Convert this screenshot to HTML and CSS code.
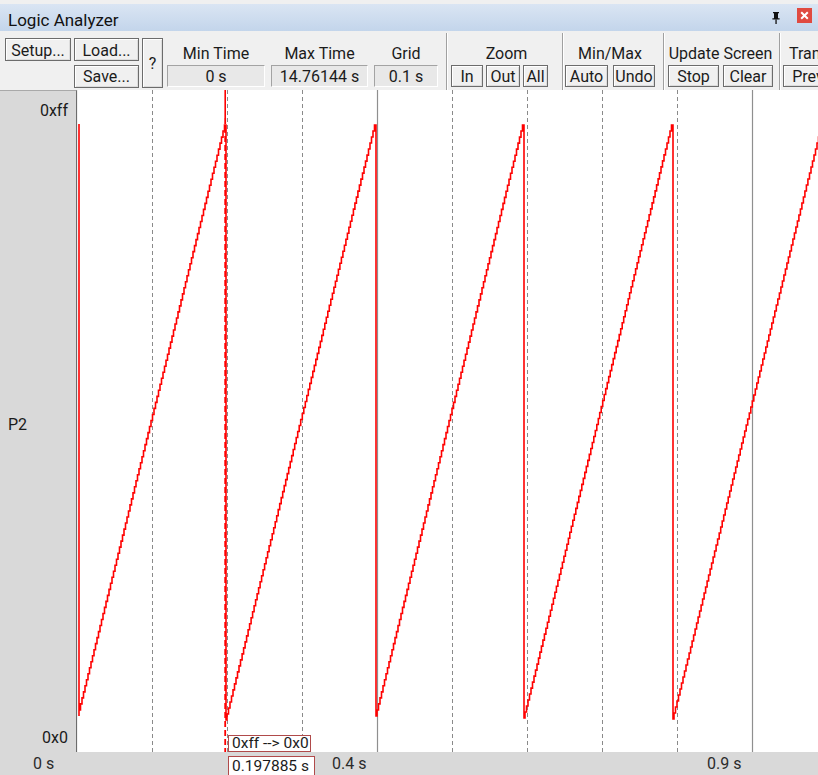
FILE: index.html
```html
<!DOCTYPE html>
<html>
<head>
<meta charset="utf-8">
<title>Logic Analyzer</title>
<link rel="stylesheet" href="styles.css">
</head>
<body>
<div class="window">
  <div class="titlebar">
    <span class="title">Logic Analyzer</span>
    <svg class="pin" width="10" height="12" viewBox="0 0 10 12"><path d="M2 0h6v1.2H7v5h1.6v1.4H1.4V6.2H3v-5H2z" fill="#111"/><rect x="4.4" y="7.4" width="1.3" height="4.6" fill="#111"/></svg>
    <span class="close"><svg width="9" height="9" viewBox="0 0 9 9"><path d="M1.2 1.2L7.8 7.8M7.8 1.2L1.2 7.8" stroke="#fff" stroke-width="2"/></svg></span>
  </div>

  <div class="toolbar">
    <div class="file-grid">
      <div class="btn b23 setup">Setup...</div>
      <div class="btn b23 load">Load...</div>
      <div class="btn b22 save">Save...</div>
      <div class="btn help">?</div>
    </div>

    <div class="grp grp-min">
      <div class="grp-label">Min Time</div>
      <div class="value">0 s</div>
    </div>
    <div class="grp grp-max">
      <div class="grp-label">Max Time</div>
      <div class="value">14.76144 s</div>
    </div>
    <div class="grp grp-grid">
      <div class="grp-label">Grid</div>
      <div class="value">0.1 s</div>
    </div>

    <div class="sep sep-1"></div>

    <div class="grp grp-zoom">
      <div class="grp-label">Zoom</div>
      <div class="btn-row">
        <div class="btn b22 w-in">In</div>
        <div class="btn b22 w-out">Out</div>
        <div class="btn b22 w-all">All</div>
      </div>
    </div>

    <div class="sep sep-2"></div>

    <div class="grp grp-minmax">
      <div class="grp-label">Min/Max</div>
      <div class="btn-row gap5">
        <div class="btn b22 w-auto">Auto</div>
        <div class="btn b22 w-undo">Undo</div>
      </div>
    </div>

    <div class="sep sep-3"></div>

    <div class="grp grp-update">
      <div class="grp-label">Update Screen</div>
      <div class="btn-row gap4">
        <div class="btn b22 w-stop">Stop</div>
        <div class="btn b22 w-clear">Clear</div>
      </div>
    </div>

    <div class="sep sep-4"></div>

    <div class="grp grp-trans">
      <div class="grp-label left">Transition</div>
      <div class="btn-row gap4">
        <div class="btn b22 w-prev">Prev</div>
        <div class="btn b22 w-next">Next</div>
      </div>
    </div>
  </div>

  <div class="main">
    <div class="labels">
      <div class="lab right">0xff</div>
      <div class="lab">P2</div>
      <div class="lab right">0x0</div>
    </div>
    <svg class="plot" width="740" height="662" viewBox="0 0 740 662">
      <g class="grid-dash">
        <line x1="74.5" y1="0" x2="74.5" y2="662"/>
        <line x1="149.5" y1="0" x2="149.5" y2="662"/>
        <line x1="224.5" y1="0" x2="224.5" y2="662"/>
        <line x1="374.5" y1="0" x2="374.5" y2="662"/>
        <line x1="449.5" y1="0" x2="449.5" y2="662"/>
        <line x1="524.5" y1="0" x2="524.5" y2="662"/>
        <line x1="599.5" y1="0" x2="599.5" y2="662"/>
      </g>
      <g class="grid-solid">
        <line x1="299.5" y1="0" x2="299.5" y2="662"/>
        <line x1="674.5" y1="0" x2="674.5" y2="662"/>
      </g>
      <path id="wave" class="wave" d="M1 34 V626"/>
      <line class="cursor-solid" x1="147.2" y1="0" x2="147.2" y2="28"/>
      <line class="cursor-dash" x1="147.2" y1="28" x2="147.2" y2="662"/>
    </svg>
  </div>

  <div class="axis">
    <span class="tick t0">0 s</span>
    <span class="tick t4">0.4 s</span>
    <span class="tick t9">0.9 s</span>
  </div>

  <div class="cbox cbox-val">0xff --&gt; 0x0</div>
  <div class="cbox cbox-time">0.197885 s</div>
</div>
<script src="script.js"></script>
</body>
</html>
```

FILE: styles.css
```css
html, body {
  margin: 0;
  padding: 0;
}
body {
  width: 818px;
  height: 775px;
  overflow: hidden;
  background: #f0f0f0;
  font-family: Roboto, "Noto Sans", "Liberation Sans", sans-serif;
  font-size: 16px;
  color: #1b1b1b;
}
.window {
  position: relative;
  width: 818px;
  height: 775px;
  display: flex;
  flex-direction: column;
  overflow: hidden;
}

/* title bar */
.titlebar {
  flex: none;
  margin-top: 4px;
  height: 27px;
  box-sizing: border-box;
  background: linear-gradient(#dae5f3, #c3d5eb);
  display: flex;
  align-items: flex-start;
  padding: 0 6px 0 8px;
}
.title {
  flex: 1;
  font-size: 17px;
  line-height: 22px;
  padding-top: 5px;
  color: #111;
}
.pin {
  margin-top: 8px;
  margin-right: 16px;
}
.close {
  margin-top: 4px;
  width: 15px;
  height: 15px;
  background: #e04a40;
  display: flex;
  align-items: center;
  justify-content: center;
}
.close svg { display: block; }

/* toolbar */
.toolbar {
  flex: none;
  height: 59px;
  box-sizing: border-box;
  padding: 7px 0 0 5px;
  display: flex;
  align-items: flex-start;
  white-space: nowrap;
  overflow: hidden;
}
.btn {
  box-sizing: border-box;
  border: 1px solid #6c6c6c;
  box-shadow: inset 1px 1px #ffffff, inset -1px -1px #dcdcdc;
  background: #f0f0f0;
  text-align: center;
  color: #1b1b1b;
  flex: none;
}
.b23 { height: 23px; line-height: 23px; }
.b22 { height: 22px; line-height: 22px; }

.file-grid {
  flex: none;
  display: grid;
  grid-template-columns: 66px 65px 21px;
  grid-template-rows: 23px 23px;
  column-gap: 3px;
  row-gap: 4px;
  margin-right: 4px;
}
.setup { grid-column: 1; grid-row: 1; }
.load  { grid-column: 2; grid-row: 1; }
.save  { grid-column: 2; grid-row: 2; height: 23px; line-height: 22px; }
.help  { grid-column: 3; grid-row: 1 / span 2; height: 50px; line-height: 50px; }

.grp {
  flex: none;
  display: flex;
  flex-direction: column;
}
.grp-label {
  height: 27px;
  box-sizing: border-box;
  padding-top: 6px;
  line-height: 20px;
  text-align: center;
}
.grp-label.left {
  text-align: left;
  padding-left: 6px;
}
.value {
  height: 22px;
  line-height: 22px;
  box-sizing: border-box;
  background: #e8e8e8;
  border-top: 1px solid #a3a3a3;
  border-left: 1px solid #a3a3a3;
  border-right: 1px solid #ffffff;
  border-bottom: 1px solid #ffffff;
  text-align: center;
}
.grp-min  { width: 98px; }
.grp-max  { width: 97px; margin-left: 6px; }
.grp-grid { width: 64px; margin-left: 6px; }

.sep {
  flex: none;
  width: 1px;
  height: 57px;
  margin-top: -5px;
  background: #a0a0a0;
  border-right: 1px solid #ffffff;
}
.sep-1 { margin-left: 8px; }
.sep-2 { margin-left: 0; }
.sep-3 { margin-left: 8px; }
.sep-4 { margin-left: 6px; }

.btn-row {
  display: flex;
  gap: 3px;
}
.btn-row.gap4 { gap: 4px; }
.btn-row.gap5 { gap: 5px; }

.grp-zoom   { width: 111px; margin-left: 3px; }
.w-in  { width: 32px; }
.w-out { width: 34px; }
.w-all { width: 25px; }

.grp-minmax { width: 90px; margin-left: 1px; }
.w-auto { width: 43px; }
.w-undo { width: 42px; }

.grp-update { width: 105px; margin-left: 3px; }
.w-stop  { width: 51px; }
.w-clear { width: 50px; }

.grp-trans { width: 110px; margin-left: 2px; }
.w-prev { width: 50px; }
.w-next { width: 50px; }

/* main plot */
.main {
  flex: none;
  height: 662px;
  display: flex;
}
.labels {
  flex: none;
  width: 77px;
  height: 662px;
  box-sizing: border-box;
  background: #d9d9d9;
  border-top: 1px solid #a9a9a9;
  border-right: 1px solid #6c6c6c;
  display: flex;
  flex-direction: column;
  justify-content: space-between;
  padding: 10px 8px 4px 8px;
  margin-right: 1px;
}
.lab {
  line-height: 20px;
  color: #1b1b1b;
}
.lab.right { text-align: right; }
.plot {
  display: block;
  flex: none;
  background: #ffffff;
}
.grid-dash line {
  stroke: #8a8a8a;
  stroke-width: 1;
  stroke-dasharray: 4 3;
}
.grid-solid line {
  stroke: #8f8f8f;
  stroke-width: 1.2;
}
.wave {
  fill: none;
  stroke: #ff0000;
  stroke-width: 1.6;
}
.cursor-solid {
  stroke: #ff0000;
  stroke-width: 1.6;
}
.cursor-dash {
  stroke: #ff0000;
  stroke-width: 1.8;
  stroke-dasharray: 6 3;
}

/* time axis */
.axis {
  flex: none;
  position: relative;
  height: 23px;
  background: #d9d9d9;
}
.tick {
  position: absolute;
  top: 0;
  line-height: 23px;
  color: #2b2b2b;
}
.t0 { left: 33px; }
.t4 { left: 332px; }
.t9 { left: 707px; }

/* cursor readout boxes */
.cbox {
  position: absolute;
  left: 228px;
  box-sizing: border-box;
  background: #ffffff;
  border: 1px solid #b04a4a;
  font-size: 15.5px;
  padding-left: 3px;
  color: #1b1b1b;
}
.cbox-val {
  top: 735px;
  width: 83px;
  height: 17px;
  line-height: 15px;
}
.cbox-time {
  top: 756px;
  width: 87px;
  height: 21px;
  line-height: 19px;
}
```

FILE: script.js
```js
(function () {
  function ramp(x0, y0, x1, y1) {
    var n = Math.round((x1 - x0) / 1.5);
    var s = '';
    for (var i = 1; i <= n; i++) {
      var x = x0 + (x1 - x0) * i / n;
      var y = y0 + (y1 - y0) * i / n;
      s += ' V' + y.toFixed(1) + ' H' + x.toFixed(1);
    }
    return s;
  }
  var d = 'M1 34 V626' +
    ramp(1, 626, 148, 35) + ' V630 H149' +
    ramp(149, 630, 298, 35) + ' V626 H299' +
    ramp(299, 626, 446, 35) + ' V628 H447' +
    ramp(447, 628, 595, 35) + ' V629 H596' +
    ramp(596, 629, 745, 35);
  document.getElementById('wave').setAttribute('d', d);
})();
```
